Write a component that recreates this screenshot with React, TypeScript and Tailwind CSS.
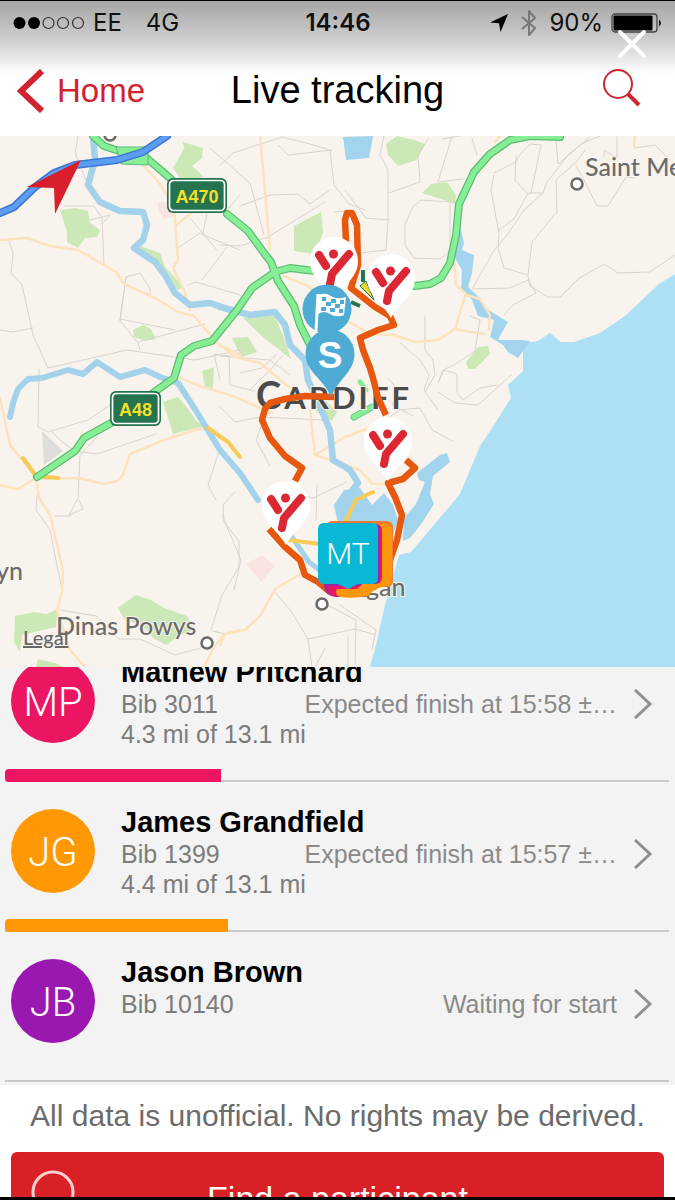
import React from "react";

const line = { fill: "none", strokeLinejoin: "round", strokeLinecap: "round" } as const;

function Signal() {
  return (
    <svg className="h-4 w-[72px]" viewBox="0 0 72 16" aria-label="Signal strength">
      <circle cx="6.5" cy="8" r="6" fill="#000" />
      <circle cx="21" cy="8" r="6" fill="#000" />
      <g fill="none" stroke="#333" strokeWidth="1.2">
        <circle cx="35.5" cy="8" r="5.5" />
        <circle cx="50" cy="8" r="5.5" />
        <circle cx="65" cy="8" r="5.5" />
      </g>
    </svg>
  );
}

function StatusBar() {
  return (
    <div className="grid h-[44px] grid-cols-3 items-center pr-3 pl-[13px] font-['Inter','Liberation_Sans',sans-serif] text-2xl text-[#111]">
      <div className="flex items-center">
        <Signal />
        <span className="ml-2">EE</span>
        <span className="ml-6">4G</span>
      </div>
      <span className="text-center font-semibold">14:46</span>
      <div className="flex items-center justify-end">
        <svg className="mr-3 h-5 w-5 shrink-0" viewBox="0 0 20 20" aria-hidden="true">
          <path d="M19 1 1 9.5l9 .7L11.5 19z" fill="#000" />
        </svg>
        <svg className="mr-3 h-7 w-4 shrink-0" viewBox="0 0 16 28" aria-hidden="true">
          <path {...line} strokeLinecap="butt" stroke="#777" strokeWidth="2" d="M1 8 14 19 8 26V2l6 7L1 20" />
        </svg>
        <span className="mr-2">90%</span>
        <svg className="h-5 w-[52px] shrink-0" viewBox="0 0 52 20" aria-hidden="true">
          <rect x="1" y="1" width="45" height="18" rx="3" fill="none" stroke="#444" strokeWidth="1.3" />
          <rect x="2.5" y="2.5" width="39" height="15" rx="1" fill="#000" />
          <path d="M48 6.5q4 3.5 0 7z" fill="#111" />
        </svg>
      </div>
    </div>
  );
}

function Header() {
  return (
    <header className="relative flex h-[135px] shrink-0 flex-col bg-linear-to-b from-[#a6a6a6] from-0% via-[#d0d0d0] via-30% to-white to-54%">
      <StatusBar />
      <div className="grid flex-1 grid-cols-[1fr_auto_1fr] items-center px-[17px]">
        <a href="#home" className="flex items-center gap-3 text-[33px] text-[#d0232f]">
          <svg className="h-11 w-7" viewBox="0 0 28 44" aria-hidden="true">
            <path d="M25 2 4 22l21 20" fill="none" stroke="#d0232f" strokeWidth="6" />
          </svg>
          Home
        </a>
        <h1 className="text-[38px] text-black">Live tracking</h1>
        <button aria-label="Search" className="mr-[17px] mb-2 justify-self-end">
          <svg className="h-10 w-10" viewBox="0 0 40 40" aria-hidden="true">
            <circle cx="17" cy="17" r="14" fill="none" stroke="#cc2733" strokeWidth="2" />
            <path d="M27 27 38 38" stroke="#cc2733" strokeWidth="4" />
          </svg>
        </button>
      </div>
      <button aria-label="Close" className="absolute top-[28px] right-[28px]">
        <svg className="h-[30px] w-[30px]" viewBox="0 0 30 30" aria-hidden="true">
          <path d="M3 3 27 27M27 3 3 27" stroke="#fff" strokeWidth="4" strokeLinecap="round" />
        </svg>
      </button>
    </header>
  );
}

function RunnerPin({ x, y }: { x: number; y: number }) {
  return (
    <g transform={`translate(${x} ${y})`}>
      <path d="M-24 0A24 24 0 1 1 24 0C24 17 9 24 0 40C-9 24-24 17-24 0z" fill="#fff" />
      <g {...line} stroke="#dc2833" strokeWidth="8">
        <path d="M-15-6-8 5M15-7-2 13-4 23" />
      </g>
      <circle cx="-0.5" cy="-7" r="4.5" fill="#dc2833" />
    </g>
  );
}

function RoadSign({ x, y, width, children }: { x: number; y: number; width: number; children: string }) {
  return (
    <g transform={`translate(${x} ${y})`}>
      <rect width={width} height="35" rx="6" fill="#26734f" />
      <rect x="2.5" y="2.5" width={width - 5} height="30" rx="4" fill="#26734f" stroke="#fff" strokeWidth="1.7" />
      <text x={width / 2} y="24.5" textAnchor="middle" className="fill-[#f5df28] font-['Liberation_Sans',sans-serif] text-[18px] font-bold">
        {children}
      </text>
    </g>
  );
}

const parks = [
  "M183 142 203 148 202 158 192 166 204 177 182 181 173 168 184 149z",
  "M60 210 75 208 88 211 90 223 100 230 97 237 85 238 78 248 67 242 67 232z",
  "M140 246 160 253 165 267 174 276 183 287 178 290 163 272 142 255z",
  "M133 330 143 325 151 329 156 339 145 341 134 337z",
  "M202 371 214 367 213 388 205 387z",
  "M163 402 178 397 189 410 196 421 205 426 173 434z",
  "M386 144 397 136 414 140 425 144 417 160 398 166 388 155z",
  "M422 193 431 184 447 182 456 195 455 204 435 197z",
  "M294 226 321 212 323 232 318 247 313 254 294 251z",
  "M243 318 274 315 283 335 291 359 264 338z",
  "M232 338 248 337 257 352 241 357z",
  "M466 362 478 347 488 346 490 354 475 369 468 369z",
  "M15 616 34 612 46 614 58 609 56 627 22 635 20 652 14 642z",
  "M118 608 136 595 151 600 164 608 187 616 194 630 179 636 166 645 153 638 143 626 124 619z",
  "M310 403 326 401 337 412 332 421 318 413z",
  "M38 659 55 663 64 667H36z",
];

const lanes = [
  "M78 136 75 153 86 180M64 206H94L102 218 104 264M90 220 110 215 104 222",
  "M9 241 13 253 11 273 22 285 33 335 48 368 127 350 195 360 240 350M0 330 12 332 33 328",
  "M120 320 126 277 140 273 150 289 150 298M126 277 120 321 138 343 140 350M120 319 175 330M138 342 205 324",
  "M188 285 196 282 240 295M178 248 200 233 213 239 240 250M202 280 227 247M190 218 217 250M203 233 207 213",
  "M39 369 38 427 48 432 88 420 110 405M52 432 60 440 74 451 97 454 156 434M98 436 80 455 78 498 69 515 83 509 79 500",
  "M37 495 36 510 50 530 62 590M55 516 71 516M60 610 96 616 105 624 119 639H140L175 655 204 647",
  "M211 630 222 595 239 567 239 541 224 522 223 505 235 492M213 631 225 634",
  "M210 148 250 183 264 235M220 165 233 153 282 137 310 144 330 150 334 185 349 204 365 210",
  "M240 206 270 195 298 194 310 204 330 190M220 245 240 246 268 237 325 202M227 210 240 195",
  "M278 145 288 155 332 150M345 190 366 218 389 220 M384 136 380 155 388 170 388 220 386 250 350 254M389 193 420 182 418 155 428 139",
  "M334 212 347 211M413 207 421 200 450 202V250L441 259 414 258 405 245 405 225zM452 136 438 182 463 179M442 139 460 136",
  "M472 139 477 155M494 173 516 162 518 157 530 144 541 145 531 193 528 194 515 180 516 155M531 193H543L547 182 568 155 590 137M556 140 558 164 583 143 600 136",
  "M494 175 491 190 499 233 498 248 504 268 528 275 532 242 557 212 556 180 577 161 585 150",
  "M498 231 514 219 528 193M543 193 524 210 507 235 493 252 483 270 472 289 510 288 528 280 536 293 513 305 504 315M528 276 530 286 548 297 560 297 578 279 604 264 618 273 650 272 675 255",
  "M576 166 582 176 597 206 608 206 626 177 635 178M604 157 604 150 617 158 617 137M634 148 655 145 670 160",
  "M240 373 262 368 277 354M220 380 214 354 229 356 230 385 255 391M220 356 270 360 290 375",
  "M400 343 420 360 429 375 424 390 438 410M470 316 480 320 475 351M475 351 454 365 443 370 438 383 444 370 457 374 457 393 463 400 480 388 497 385M438 392 455 403 478 405 511 375",
  "M425 316 425 350 433 360 435 375 425 392M388 378 398 390 392 405 413 416M370 430 400 410 420 408 432 430 453 441",
  "M220 407 235 422 260 417 323 420M264 419 256 440 270 466M300 495 313 498 347 482M317 485 316 520",
  "M220 448 208 485 216 500M222 515 241 560 234 590M250 390 270 370 283 355",
  "M273 590 291 611 308 639 355 629 376 635M308 639 312 667M325 604 356 620 355 667M348 637 348 667M340 605 376 630 372 650M325 648 315 667",
];

const lowRoads = [
  "M0 240 27 238 50 246 78 250 116 272 124 284 155 298 178 312 194 316 219 345 240 355",
  "M144 166 160 184 174 207 178 260 173 268 184 290 190 310M176 225 192 213",
  "M0 485 18 489 34 479 79 478 104 484 117 481 123 475 130 454 164 440 198 429 208 428",
  "M0 398 10 445 36 477 39 498 50 515 63 570 62 592 57 610 70 650 85 667",
  "M260 136 264 180 270 250M284 276 310 287 320 303M180 378 200 386 230 395 272 413 M220 345 235 357 260 363 285 384 298 392",
  "M346 320 370 334 394 335 415 342 438 340 455 329 465 296M453 250 456 285 467 295 480 299 490 315 489 330M453 329 485 334",
  "M495 142 500 136M634 146 635 136M310 410 315 455 360 470 372 484 386 484M315 455 345 437 372 427",
  "M204 667 215 645 225 634 240 630M220 645 225 634 245 630 260 616 275 589 302 573",
];

const mainRoads = [
  "M93 136 104 146 125 153 143 155 163 172 172 180",
  "M227 214 248 231 264 253 271 262 278 281 294 306 300 325 310 345",
  "M37 477 75 451 84 438 111 423 146 398 174 378 181 355 194 346 212 341 237 310 252 288 275 272 290 268 315 271",
  "M415 286 430 284 441 278 450 263 456 235 459 204 474 172 490 154 510 140 530 136 560 137",
];

function TrackingMap() {
  return (
    <section aria-label="Map" className="relative shrink-0">
      <svg viewBox="0 136 675 531" className="block w-full" role="img" aria-label="Course map of Cardiff">
        <rect y="136" width="675" height="531" fill="#f8f4ed" />
        <g fill="#cce8b7">{parks.map((d) => <path key={d} d={d} />)}</g>
        <path d="M158 202 175 202 176 216 163 219 158 210zM246 564 262 555 275 566 261 582 252 571z" fill="#f8e5e0" />
        <path d="M42 431 63 451 44 465z" fill="#deddda" />
        <path
          d="M675 274 659 284 642 300 625 316 600 333 574 342 561 342 550 333 538 341 523 343 523 371 508 385 511 398 494 425 480 446 460 494 411 552 399 555 385 605 376 645 370 667H675z"
          fill="#ade0f5"
        />
        <path
          d="M343 137 373 136 369 158 346 160zM459 221 464 243 462 250 474 255 472 273 468 287 480 298 487 309 508 322 501 334 498 340 523 340 530 341 518 358 508 352 503 345 490 337 494 320 478 316 472 300 461 288 462 270 455 258zM334 505 344 490 360 488 372 505 384 493 393 505 398 520 390 545 345 555zM403 541 404 518 416 504 425 482 419 480 417 473 440 455 447 453 450 462 433 476 430 494 434 504 422 523 410 538z"
          fill="#a3d4ed"
        />
        <g {...line} stroke="#d8d3ce" strokeWidth="1">{lanes.map((d) => <path key={d} d={d} />)}</g>
        <g {...line} stroke="#fce2bd" strokeWidth="2.5">{lowRoads.map((d) => <path key={d} d={d} />)}</g>
        <g {...line} stroke="#a3d2ea">
          <path
            strokeWidth="6.5"
            d="M93 136 95 160 88 185 100 202 120 211 143 212 147 225 143 240 134 248 155 262 165 275 175 293 190 305 210 303 234 311 M220 307 250 315 275 312 285 325 290 345 305 360 308 380 318 402 330 430 333 460 350 470 358 483 345 500"
          />
          <path strokeWidth="6" d="M10 417 13 403 18 389 28 379 42 378 68 370 83 374 97 362 120 377 145 370 160 377 178 383 195 409 220 450 240 473 258 500" />
          <path strokeWidth="5" d="M290 534 309 562 326 575" />
        </g>
        <path {...line} stroke="#f8cb58" strokeWidth="4" d="M23 458 36 476 58 478M208 428 228 442 240 457 M288 540 320 544M345 522 356 500 373 492" />
        <g {...line} stroke="#5dbc72" strokeWidth="8">{mainRoads.map((d) => <path key={d} d={d} />)}</g>
        <g {...line} stroke="#86ee95" strokeWidth="5.5">{mainRoads.map((d) => <path key={d} d={d} />)}</g>
        <path d="M116 147 148 147 148 165 121 164z" fill="#86ee95" stroke="#5dbc72" />
        <path {...line} stroke="#6ac881" strokeWidth="7" d="M354 417 372 407" />
        <path {...line} stroke="#86ee95" strokeWidth="5" d="M354 417 372 407M360 382 366 390" />
        <path {...line} stroke="#3f77cf" strokeWidth="8" d="M0 213 14 207 35 187 54 173 75 165 117 160 143 152 167 136" />
        <path {...line} stroke="#5c9df4" strokeWidth="5" d="M0 213 14 207 35 187 54 173 75 165 117 160 143 152 167 136" />
        <path d="M81 160 27 187 54 188 55 214z" fill="#d91f2b" />

        <g className="fill-[#6c6b69] font-['Lato',sans-serif] text-[25px] font-medium" stroke="#f8f4ed" strokeWidth="2" paintOrder="stroke">
          <text x="585" y="176">Saint Mellons</text>
          <text x="56" y="635">Dinas Powys</text>
          <text x="-4" y="580">yn</text>
          <text x="366" y="596">gan</text>
        </g>
        <g fill="#fff" stroke="#696865" strokeWidth="2.5">
          <circle cx="110" cy="135" r="5.5" />
          <circle cx="577" cy="184" r="5.5" />
          <circle cx="207" cy="643" r="5.5" />
          <circle cx="322" cy="604" r="5.5" />
        </g>
        <text x="256" y="409" className="fill-[#4b4b4b] font-['Lato',sans-serif] text-[31px] font-bold tracking-widest" stroke="#f8f4ed" strokeWidth="2" paintOrder="stroke">
          <tspan className="text-[38px]">C</tspan>ARDIFF
        </text>
        <RoadSign x={167} y={178} width={60}>A470</RoadSign>
        <RoadSign x={110} y={391} width={51}>A48</RoadSign>
        <path d="M351 302 360 306M363 270V282" stroke="#26734f" strokeWidth="4" />
        <path d="M360 286 366 281 374 300z" fill="#ead63b" stroke="#26734f" />

        <g {...line} strokeLinecap="butt" stroke="#e6570f" strokeWidth="6.5">
          <path d="M334 397 305 396 285 399 270 403 265 409 262 420 270 438 285 456 302 468 295 481" />
          <path d="M269 529 285 547 300 560 305 575 318 582 330 592" />
          <path d="M346 242 345 220 347 213 352 213 357 225 358 265 351 288 375 307 390 316 394 325 378 330 360 338 363 350 370 368 373 378 378 398 386 415" />
          <path d="M406 460 415 468 403 479 388 483 395 497 402 515 397 540 390 560" />
        </g>
        <RunnerPin x={334} y={261} />
        <RunnerPin x={391} y={278} />
        <RunnerPin x={388} y={441} />
        <RunnerPin x={286} y={505} />

        <circle cx="327" cy="309" r="24.5" fill="#4eabd4" />
        <path d="M318 294 316 331" stroke="#fff" strokeWidth="3" />
        <path d="M318 295q7-3 13 1t15 1l-2 18q-8 3-14-1t-12 0z" fill="#fff" />
        <path d="M322 297h4v4h-4zM331 299h5v4h-5zM340 300h4v4h-4zM326 302h5v4h-5zM335 304h5v4h-5zM321 307h5v4h-5zM330 308h5v4h-5zM339 309h4v4h-4z" fill="#4eabd4" />
        <path d="M305.5 354a24.5 24.5 0 1 1 49 0C354.5 372 338 379 331 397C324 379 305.5 372 305.5 354z" fill="#4eabd4" />
        <text x="330" y="368" textAnchor="middle" className="fill-white font-['Liberation_Sans',sans-serif] text-[37px] font-bold">S</text>

        <rect x="326" y="521" width="67" height="66" rx="6" fill="#f47b35" />
        <rect x="332" y="524" width="60" height="62" rx="6" fill="#fc970d" />
        <path d="M324 584q0 12 12 13h30l8-13z" fill="#9d27a6" />
        <path d="M328 586q-2 11 12 11h20l8-11z" fill="#e91765" />
        <path d="M392 574v6q0 6-10 7-8 2-14 9-14 3-28 1-6-3-3-8h20l10-9z" fill="#fc970d" />
        <rect x="325" y="524" width="57" height="60" rx="6" fill="#e91765" />
        <rect x="321" y="524" width="59" height="60" rx="6" fill="#9d27a6" />
        <path d="M324 523H372q6 0 6 6V578q0 6-6 6H358L348 589 338 584H324q-6 0-6-6V529q0-6 6-6z" fill="#08b8d4" />
        <text x="348" y="564" textAnchor="middle" className="fill-white font-['Roboto',sans-serif] text-[30px] font-light">MT</text>
      </svg>
      <a href="#legal" className="absolute bottom-[18px] left-[23px] font-['Lato',sans-serif] text-[20px] leading-6 font-medium text-[#666] underline">
        Legal
      </a>
    </section>
  );
}

type Runner = { initials: string; name: string; bib: string; distance?: string; status: string; progress: number; color: string };

const runners: Runner[] = [
  { initials: "MP", name: "Mathew Pritchard", bib: "Bib 3011", distance: "4.3 mi of 13.1 mi", status: "Expected finish at 15:58 ±…", progress: 32.6, color: "bg-[#ec1561]" },
  { initials: "JG", name: "James Grandfield", bib: "Bib 1399", distance: "4.4 mi of 13.1 mi", status: "Expected finish at 15:57 ±…", progress: 33.6, color: "bg-[#ff9803]" },
  { initials: "JB", name: "Jason Brown", bib: "Bib 10140", status: "Waiting for start", progress: 0, color: "bg-[#9b18b0]" },
];

function RunnerRow({ runner }: { runner: Runner }) {
  return (
    <li className="flex h-[150px] flex-col justify-between pr-[6px] pl-[5px]">
      <a href="#runner" className="flex gap-[26px] pr-4 pl-[6px]">
        <span className={`mt-[27px] flex h-[84px] w-[84px] shrink-0 items-center justify-center rounded-full pt-1 font-['Roboto',sans-serif] text-[40px] font-light text-white ${runner.color}`}>
          {runner.initials}
        </span>
        <span className="flex min-w-0 flex-1 flex-col pt-[23px] text-[25px] leading-[30px] text-[#7c7c7c]">
          <span className="text-[29px] leading-[34px] font-bold text-black">{runner.name}</span>
          <span className="flex justify-between">
            <span>{runner.bib}</span>
            <span className="flex items-center gap-4 whitespace-nowrap text-[#8a8a8a]">
              {runner.status}
              <svg className="h-[30px] w-5" viewBox="0 0 20 30" aria-hidden="true">
                <path d="M2 1 17 15 2 29" fill="none" stroke="#909090" strokeWidth="3" />
              </svg>
            </span>
          </span>
          <span>{runner.distance}</span>
        </span>
      </a>
      <div className="flex h-[13px] items-end border-b-2 border-[#c9c9c9]">
        <div className={`-mb-[2px] h-[13px] shrink-0 rounded-l ${runner.color}`} style={{ width: `${runner.progress}%` }} />
      </div>
    </li>
  );
}

export default function App() {
  return (
    <div className="flex h-screen flex-col overflow-hidden border-t border-b-[3px] border-black bg-white font-['Liberation_Sans',Arial,sans-serif]">
      <Header />
      <TrackingMap />
      <main className="shrink-0 overflow-hidden bg-[#f3f3f3] pb-[3px]">
        <ul className="-mt-[35px]">
          {runners.map((runner) => <RunnerRow key={runner.bib} runner={runner} />)}
        </ul>
      </main>
      <footer className="shrink-0 px-[11px]">
        <p className="pt-3 pb-[17px] text-center text-[30px] leading-[38px] whitespace-nowrap text-[#6b6b6b]">
          All data is unofficial. No rights may be derived.
        </p>
        <button className="relative flex h-[92px] w-full items-center justify-center rounded-md bg-[#da2027] text-[34px] text-white">
          <svg className="absolute left-[20px] h-14 w-14" viewBox="0 0 56 56" aria-hidden="true">
            <circle cx="22" cy="22" r="20" fill="none" stroke="#ffd0d0" strokeWidth="3" />
            <path d="m36 36 16 16" stroke="#ffd0d0" strokeWidth="5" />
          </svg>
          Find a participant
        </button>
      </footer>
    </div>
  );
}
